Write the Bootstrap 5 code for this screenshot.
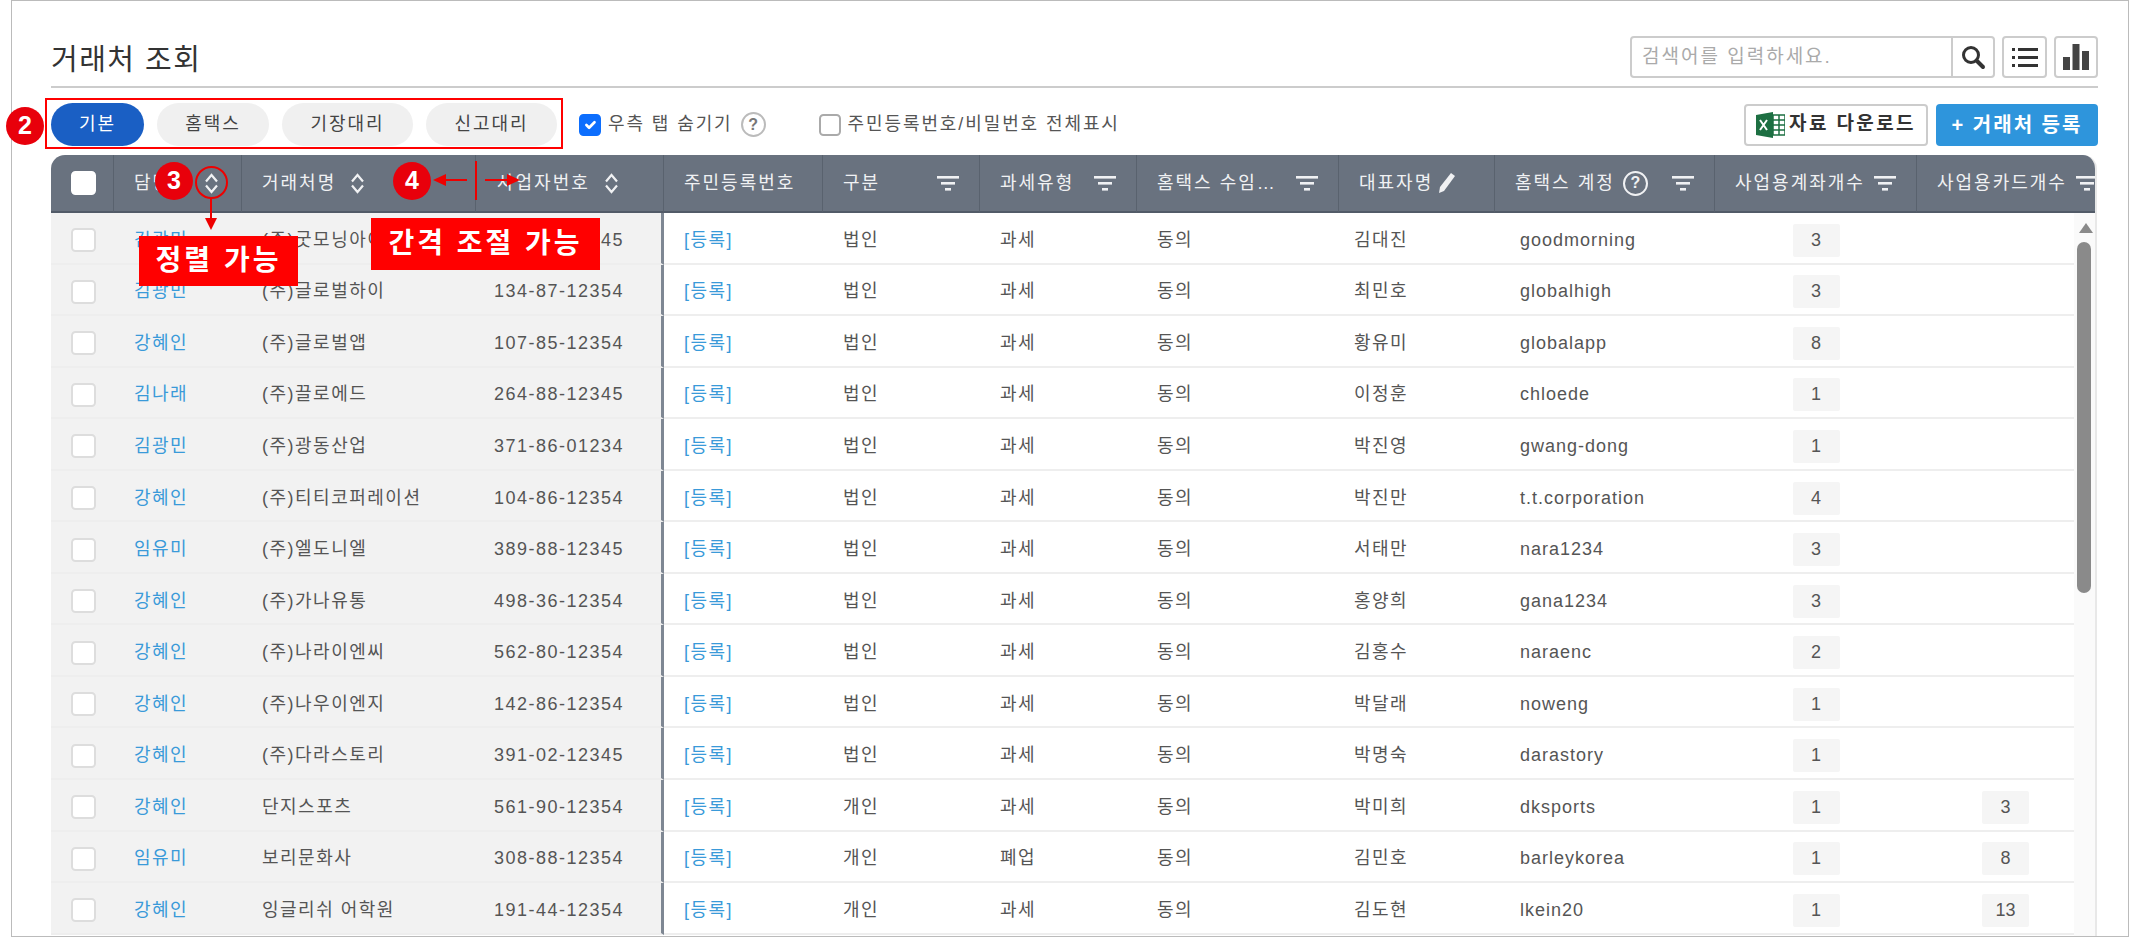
<!DOCTYPE html>
<html lang="ko">
<head>
    <meta charset="UTF-8">
    <title>거래처 조회</title>
    <link href="https://cdn.jsdelivr.net/npm/bootstrap@5.3.1/dist/css/bootstrap.min.css" rel="stylesheet">
    <script src="https://cdn.jsdelivr.net/npm/bootstrap@5.3.1/dist/js/bootstrap.bundle.min.js"></script>
    <style>
        body {
            margin: 0;
            background: #fff;
            font-family: "Liberation Sans", "Noto Sans CJK KR", sans-serif;
            font-size: 18px;
            letter-spacing: 1.5px;
            color: #555;
            overflow: hidden;
        }
        .page-frame {
            margin-left: 11px;
            width: 2118px;
            height: 937px;
            border: 1px solid #bbb;
            padding: 35px 30px 0 39px;
            overflow: hidden;
        }

        /* 제목줄 */
        .title-bar {
            height: 52px;
            border-bottom: 2px solid #ccc;
        }
        .page-title {
            font-size: 29px;
            font-weight: 400;
            letter-spacing: 1.5px;
            color: #333;
            margin: 7px 0 0;
        }
        .tool-gap { gap: 7px; }
        .search-group { width: 365px; height: 42px; }
        .search-group .form-control {
            border: 2px solid #ccc;
            border-radius: 4px 0 0 4px;
            font-size: 19px;
            letter-spacing: 2px;
            padding: 0 10px;
        }
        .search-group .form-control::placeholder { color: #aaa; }
        .tool-btn {
            border: 2px solid #ccc;
            border-radius: 4px;
            background: #fff;
            height: 42px;
            padding: 0;
            display: flex;
            align-items: center;
            justify-content: center;
        }
        .search-group .tool-btn { width: 44px; border-radius: 0 4px 4px 0; margin-left: -2px !important; }
        .list-btn { width: 45px; }
        .chart-btn { width: 44px; }

        /* 탭 + 옵션 */
        .tool-row { height: 43px; margin-top: 15px; }
        .tab-pill {
            height: 43px;
            border: 0;
            border-radius: 22px;
            background: #f0f0f0;
            color: #444;
            font-size: 18px;
            letter-spacing: 2px;
            padding: 0;
            margin-right: 13px;
        }
        .tab-pill.is-on { background: #1a5fc4; color: #fff; }
        .w-tab1 { width: 93px; }
        .w-tab2 { width: 112px; }
        .w-tab3 { width: 131px; }
        .opt-check { width: 22px; height: 22px; margin: 0 7px 0 0; border: 2px solid #aaa; border-radius: 4px; }
        .opt-check:checked { border-color: #0d6efd; }
        .opt-first { margin-left: 22px; }
        .opt-second { margin-left: 53px; }
        .opt-label { font-size: 18px; color: #555; letter-spacing: 1.9px; }
        .help-mark {
            width: 25px;
            height: 25px;
            border: 2px solid #bbb;
            border-radius: 50%;
            color: #777;
            font-size: 16px;
            font-weight: 700;
            letter-spacing: 0;
            display: inline-flex;
            align-items: center;
            justify-content: center;
        }
        .help-light { border-color: #f0f1f3; color: #f0f1f3; }
        .excel-btn {
            width: 184px;
            height: 42px;
            border: 2px solid #ccc;
            border-radius: 4px;
            background: #fff;
            color: #333;
            font-weight: 700;
            font-size: 19px;
            letter-spacing: 2.4px;
            padding: 0;
        }
        .add-btn {
            width: 162px;
            height: 42px;
            border: 0;
            border-radius: 4px;
            background: #2e95dc;
            color: #fff;
            font-weight: 700;
            font-size: 20px;
            letter-spacing: 2px;
            padding: 0;
        }

        /* 표 */
        .grid-wrap {
            position: relative;
            margin-top: 9px;
            width: 2046px;
            height: 782px;
            overflow: hidden;
            border-radius: 14px 14px 0 0;
            border-right: 2px solid #e8e8e8;
        }
        .grid-table {
            width: 2068px;
            table-layout: fixed;
            border-collapse: separate;
            border-spacing: 0;
            margin: 0;
        }
        .grid-table th {
            height: 58px;
            background: #69727f;
            color: #f0f1f3;
            font-weight: 400;
            letter-spacing: 2px;
            padding: 0 20px;
            border-right: 1px solid #59626e;
            border-bottom: 2px solid #525b68;
            white-space: nowrap;
            overflow: hidden;
        }
        .grid-table td {
            height: 51.55px;
            padding: 5px 20px 0;
            border-bottom: 2px solid #eee;
            white-space: nowrap;
            overflow: hidden;
            color: #555;
            background: #fff;
        }
        .grid-table td.fix-cell { background: #f2f2f2; }
        .grid-table td.fix-end { border-right: 3px solid #7e8793; }
        .grid-table th.th-num { padding-left: 21px; }
        .grid-table a { color: #3a9ad9; text-decoration: none; }
        .row-check {
            width: 25px;
            height: 24px;
            margin: 0;
            display: block;
            border: 2px solid #ddd;
            border-radius: 6px;
        }
        .grid-table th .row-check { border-color: #fff; }
        .grid-table .check-cell { padding-left: 20px; padding-right: 0; }
        .grid-table .name-account { padding-left: 25px; letter-spacing: 1px; }
        .grid-table .name-boss { padding-left: 15px; }
        .grid-table .num-cell { padding-left: 18px; padding-right: 0; }
        .grid-table .count-left { padding-left: 65px; }
        .count-box {
            display: inline-flex;
            align-items: center;
            justify-content: center;
            width: 47px;
            height: 33px;
            background: #f5f5f5;
            border-radius: 2px;
            letter-spacing: 0;
        }
        .head-cell { display: flex; align-items: center; justify-content: space-between; }
        .head-sort { display: flex; align-items: center; gap: 14px; }
        .th-boss { gap: 5px; justify-content: flex-start; }

        /* 스크롤바 */
        .scroll-rail {
            position: absolute;
            left: 2023px;
            top: 58px;
            bottom: 0;
            width: 23px;
            background: #fafafa;
        }
        .scroll-up {
            position: absolute;
            left: 5px;
            top: 10px;
            width: 0;
            height: 0;
            border-left: 7px solid transparent;
            border-right: 7px solid transparent;
            border-bottom: 10px solid #8a8a8a;
        }
        .scroll-thumb {
            position: absolute;
            left: 3px;
            top: 29px;
            width: 14px;
            height: 351px;
            background: #8a8a8a;
            border-radius: 7px;
        }

        /* 안내 표시 */
        .note-ring {
            position: absolute;
            width: 38px;
            height: 38px;
            border-radius: 50%;
            background: #e8000b;
            color: #fff;
            font-weight: 700;
            font-size: 25px;
            letter-spacing: 0;
            display: flex;
            align-items: center;
            justify-content: center;
        }
        .ring-2 { left: 6px; top: 107px; }
        .ring-3 { left: 155px; top: 162px; }
        .ring-4 { left: 393px; top: 162px; }
        .note-box {
            position: absolute;
            background: #f00;
            color: #fff;
            font-weight: 700;
            font-size: 28px;
            letter-spacing: 3px;
            display: flex;
            align-items: center;
            justify-content: center;
        }
        .box-sort { left: 139px; top: 236px; width: 159px; height: 50px; }
        .box-size { left: 371px; top: 218px; width: 229px; height: 52px; }
        .note-tabs { position: absolute; left: 45px; top: 98px; width: 518px; height: 51px; border: 2px solid #f00; }
        .note-sort-ring { position: absolute; left: 195px; top: 166px; width: 33px; height: 33px; border: 2px solid #e00; border-radius: 50%; }
        .note-svg { position: absolute; left: 0; top: 0; }
    </style>
</head>
<body>
    <div class="page-frame">
        <div class="title-bar d-flex justify-content-between align-items-start">
            <h1 class="page-title">거래처 조회</h1>
            <div class="d-flex tool-gap">
                <div class="input-group search-group">
                    <input type="text" class="form-control" placeholder="검색어를 입력하세요.">
                    <button class="tool-btn" type="button">
                        <svg width="26" height="26" viewBox="0 0 26 26" fill="none" stroke="#333"><circle cx="11" cy="11" r="7.5" stroke-width="3"/><path d="M16.5 16.5 23 23" stroke-width="4" stroke-linecap="round"/></svg>
                    </button>
                </div>
                <button class="tool-btn list-btn" type="button">
                    <svg width="26" height="22" viewBox="0 0 26 22" fill="#333"><rect x="0" y="2" width="3" height="3"/><rect x="6" y="2" width="20" height="3"/><rect x="0" y="10" width="3" height="3"/><rect x="6" y="10" width="20" height="3"/><rect x="0" y="18" width="3" height="3"/><rect x="6" y="18" width="20" height="3"/></svg>
                </button>
                <button class="tool-btn chart-btn" type="button">
                    <svg width="28" height="28" viewBox="0 0 28 28" fill="#444"><rect x="1" y="14" width="7" height="13"/><rect x="10.5" y="1" width="7" height="26"/><rect x="20" y="8" width="7" height="19"/></svg>
                </button>
            </div>
        </div>

        <div class="tool-row d-flex align-items-center">
            <button class="tab-pill is-on w-tab1" type="button">기본</button>
            <button class="tab-pill w-tab2" type="button">홈택스</button>
            <button class="tab-pill w-tab3" type="button">기장대리</button>
            <button class="tab-pill w-tab3 me-0" type="button">신고대리</button>
            <input class="form-check-input opt-check opt-first" type="checkbox" checked>
            <span class="opt-label">우측 탭 숨기기</span>
            <span class="help-mark ms-2">?</span>
            <input class="form-check-input opt-check opt-second" type="checkbox">
            <span class="opt-label">주민등록번호/비밀번호 전체표시</span>
            <div class="ms-auto d-flex gap-2">
                <button class="excel-btn d-flex align-items-center justify-content-center gap-1" type="button">
                    <svg width="29" height="26" viewBox="0 0 29 26"><path d="M0 3 17 0V26L0 23Z" fill="#1d6f42"/><rect x="17" y="3" width="12" height="20" fill="#fff" stroke="#1d6f42" stroke-width="1.5"/><path d="M17 8H29M17 13H29M17 18H29M23 3V23" stroke="#1d6f42" stroke-width="1.5"/><path d="M4 8 11 18M11 8 4 18" stroke="#fff" stroke-width="2"/></svg>
                    자료 다운로드
                </button>
                <button class="add-btn" type="button">+ 거래처 등록</button>
            </div>
        </div>

        <div class="grid-wrap">
            <table class="grid-table">
                <colgroup id="grid-cols"></colgroup>
                <thead>
                    <tr id="grid-head"></tr>
                </thead>
                <tbody id="grid-body"></tbody>
            </table>
            <div class="scroll-rail">
                <div class="scroll-up"></div>
                <div class="scroll-thumb"></div>
            </div>
        </div>
    </div>

    <!-- 안내 표시 -->
    <div class="note-tabs"></div>
    <div class="note-ring ring-2">2</div>
    <div class="note-ring ring-3">3</div>
    <div class="note-ring ring-4">4</div>
    <div class="note-sort-ring"></div>
    <svg class="note-svg" width="700" height="300" fill="#e00" stroke="#e00">
        <path d="M211 198V222" stroke-width="2" fill="none"/>
        <path d="M205 218H217L211 230Z" stroke="none"/>
        <path d="M445 180H467" stroke-width="2" fill="none"/>
        <path d="M433 180 446 174V186Z" stroke="none"/>
        <path d="M476 161V200" stroke-width="2" fill="none"/>
        <path d="M485 180H508" stroke-width="2" fill="none"/>
        <path d="M520 180 507 174V186Z" stroke="none"/>
    </svg>
    <div class="note-box box-sort">정렬 가능</div>
    <div class="note-box box-size">간격 조절 가능</div>

    <script>
        const colWidths = [63, 128, 234, 188, 159, 157, 157, 202, 156, 220, 202, 202];

        const sortIcon = '<svg width="15" height="21" viewBox="0 0 15 21" fill="none" stroke="#f0f1f3" stroke-width="2.2"><path d="M2 8.5 7.5 2 13 8.5M2 12.5 7.5 19 13 12.5"/></svg>';
        const filterIcon = '<svg width="22" height="15" viewBox="0 0 22 15" fill="#f0f1f3" class="flex-shrink-0"><rect x="0" y="0" width="22" height="2.6"/><rect x="4" y="6" width="14" height="2.6"/><rect x="8" y="12" width="6" height="2.6"/></svg>';
        const penIcon = '<svg width="18" height="22" viewBox="0 0 18 22" fill="#f0f1f3"><path d="M13 1 17 4 6 19 1 21 2 15Z"/></svg>';
        const helpIcon = '<span class="help-mark help-light">?</span>';

        const head = [
            '<th class="check-cell"><input class="form-check-input row-check" type="checkbox"></th>',
            `<th><div class="head-sort"><span>담당자</span>${sortIcon}</div></th>`,
            `<th><div class="head-sort"><span>거래처명</span>${sortIcon}</div></th>`,
            `<th class="th-num"><div class="head-sort"><span>사업자번호</span>${sortIcon}</div></th>`,
            '<th>주민등록번호</th>',
            `<th><div class="head-cell"><span>구분</span>${filterIcon}</div></th>`,
            `<th><div class="head-cell"><span>과세유형</span>${filterIcon}</div></th>`,
            `<th><div class="head-cell"><span>홈택스 수임…</span>${filterIcon}</div></th>`,
            `<th><div class="head-cell th-boss"><span>대표자명</span>${penIcon}</div></th>`,
            `<th><div class="head-cell"><span class="d-flex align-items-center gap-2">홈택스 계정${helpIcon}</span>${filterIcon}</div></th>`,
            `<th><div class="head-cell"><span>사업용계좌개수</span>${filterIcon}</div></th>`,
            `<th><div class="head-cell"><span>사업용카드개수</span>${filterIcon}</div></th>`
        ];

        const rows = [
            ['김광민', '(주)굿모닝아이', '120-86-12345', '법인', '과세', '김대진', 'goodmorning', 3, ''],
            ['김광민', '(주)글로벌하이', '134-87-12354', '법인', '과세', '최민호', 'globalhigh', 3, ''],
            ['강혜인', '(주)글로벌앱', '107-85-12354', '법인', '과세', '황유미', 'globalapp', 8, ''],
            ['김나래', '(주)끌로에드', '264-88-12345', '법인', '과세', '이정훈', 'chloede', 1, ''],
            ['김광민', '(주)광동산업', '371-86-01234', '법인', '과세', '박진영', 'gwang-dong', 1, ''],
            ['강혜인', '(주)티티코퍼레이션', '104-86-12354', '법인', '과세', '박진만', 't.t.corporation', 4, ''],
            ['임유미', '(주)엘도니엘', '389-88-12345', '법인', '과세', '서태만', 'nara1234', 3, ''],
            ['강혜인', '(주)가나유통', '498-36-12354', '법인', '과세', '홍양희', 'gana1234', 3, ''],
            ['강혜인', '(주)나라이엔씨', '562-80-12354', '법인', '과세', '김홍수', 'naraenc', 2, ''],
            ['강혜인', '(주)나우이엔지', '142-86-12354', '법인', '과세', '박달래', 'noweng', 1, ''],
            ['강혜인', '(주)다라스토리', '391-02-12345', '법인', '과세', '박명숙', 'darastory', 1, ''],
            ['강혜인', '단지스포츠', '561-90-12354', '개인', '과세', '박미희', 'dksports', 1, 3],
            ['임유미', '보리문화사', '308-88-12354', '개인', '폐업', '김민호', 'barleykorea', 1, 8],
            ['강혜인', '잉글리쉬 어학원', '191-44-12354', '개인', '과세', '김도현', 'lkein20', 1, 13]
        ];

        document.getElementById('grid-cols').innerHTML = colWidths.map(w => `<col style="width:${w}px">`).join('');
        document.getElementById('grid-head').innerHTML = head.join('');
        document.getElementById('grid-body').innerHTML = rows.map(r => `
            <tr>
                <td class="fix-cell check-cell"><input class="form-check-input row-check" type="checkbox"></td>
                <td class="fix-cell"><a href="#">${r[0]}</a></td>
                <td class="fix-cell">${r[1]}</td>
                <td class="fix-cell fix-end num-cell">${r[2]}</td>
                <td><a href="#">[등록]</a></td>
                <td>${r[3]}</td>
                <td>${r[4]}</td>
                <td>동의</td>
                <td class="name-boss">${r[5]}</td>
                <td class="name-account">${r[6]}</td>
                <td class="text-center"><span class="count-box">${r[7]}</span></td>
                <td class="count-left">${r[8] !== '' ? `<span class="count-box">${r[8]}</span>` : ''}</td>
            </tr>`).join('');
    </script>
</body>
</html>
